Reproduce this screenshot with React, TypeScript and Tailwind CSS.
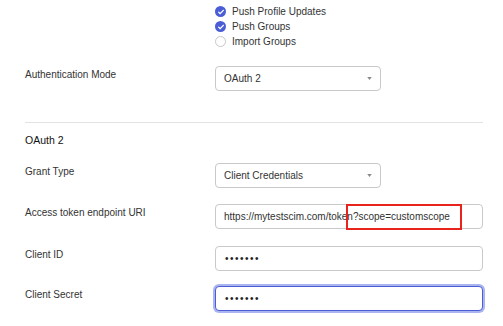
const font = { fontFamily: "'Liberation Sans', Arial, sans-serif" };

function Check({ checked, label }: { checked: boolean; label: string }) {
  return (
    <div className="flex items-center gap-[6px] h-[15px]">
      {checked ? (
        <span className="w-[11px] h-[11px] rounded-full bg-[#4a5dd6] flex items-center justify-center">
          <svg viewBox="0 0 12 12" className="w-[8px] h-[8px]" fill="none">
            <path d="M2.5 6.2l2.3 2.3 4.7-5" stroke="white" strokeWidth="2" strokeLinecap="round" strokeLinejoin="round" />
          </svg>
        </span>
      ) : (
        <span className="w-[11px] h-[11px] rounded-full border border-[#c8c8c8] bg-white" />
      )}
      <span className="text-[10px] text-[#333]">{label}</span>
    </div>
  );
}

function Select({ value }: { value: string }) {
  return (
    <div className="w-[166px] h-[25px] border border-[#c9c9c9] rounded-[4px] bg-white flex items-center justify-between pl-[8px] pr-[8px]">
      <span className="text-[10px] text-[#333]">{value}</span>
      <svg viewBox="0 0 6 4" className="w-[5px] h-[3px]">
        <path d="M0 0h6L3 4z" fill="#8a8a8a" />
      </svg>
    </div>
  );
}

function Row({ label, children, className = "" }: { label: string; children: React.ReactNode; className?: string }) {
  return (
    <div className={`flex ${className}`}>
      <div className="w-[190px] pt-[2px] text-[10px] text-[#333] leading-[14px]">{label}</div>
      {children}
    </div>
  );
}

export default function App() {
  return (
    <div className="w-[503px] h-[326px] bg-white overflow-hidden pl-[25px] pr-[20px]" style={font}>
      <div className="pl-[190px] pt-[4px] flex flex-col">
        <Check checked label="Push Profile Updates" />
        <Check checked label="Push Groups" />
        <Check checked={false} label="Import Groups" />
      </div>

      <Row label="Authentication Mode" className="mt-[17px]">
        <Select value="OAuth 2" />
      </Row>

      <div className="mt-[31px] border-t border-[#e2e2e2]" />

      <div className="mt-[10px] text-[10.5px] text-[#111] leading-[14px]">OAuth 2</div>

      <Row label="Grant Type" className="mt-[16px]">
        <Select value="Client Credentials" />
      </Row>

      <Row label="Access token endpoint URI" className="mt-[16px]">
        <div className="relative w-[268px] h-[25px] border border-[#c9c9c9] rounded-[4px] bg-white flex items-center pl-[8px]">
          <span className="text-[10px] text-[#333] whitespace-nowrap">https://mytestscim.com/token?scope=customscope</span>
          <div className="absolute left-[130px] top-[-1px] w-[116px] h-[26px] border-2 border-[#e8231c]" />
        </div>
      </Row>

      <Row label="Client ID" className="mt-[17px]">
        <div className="w-[268px] h-[25px] border border-[#c9c9c9] rounded-[4px] bg-white flex items-center pl-[9px]">
          <span className="text-[10px] tracking-[1.5px] text-[#222]">•••••••</span>
        </div>
      </Row>

      <Row label="Client Secret" className="mt-[15px]">
        <div className="w-[268px] h-[25px] border-[1.5px] border-[#4a5dd6] rounded-[4px] bg-white flex items-center pl-[9px] shadow-[0_0_0_2px_#aab5ef]">
          <span className="text-[10px] tracking-[1.5px] text-[#222]">•••••••</span>
        </div>
      </Row>
    </div>
  );
}
